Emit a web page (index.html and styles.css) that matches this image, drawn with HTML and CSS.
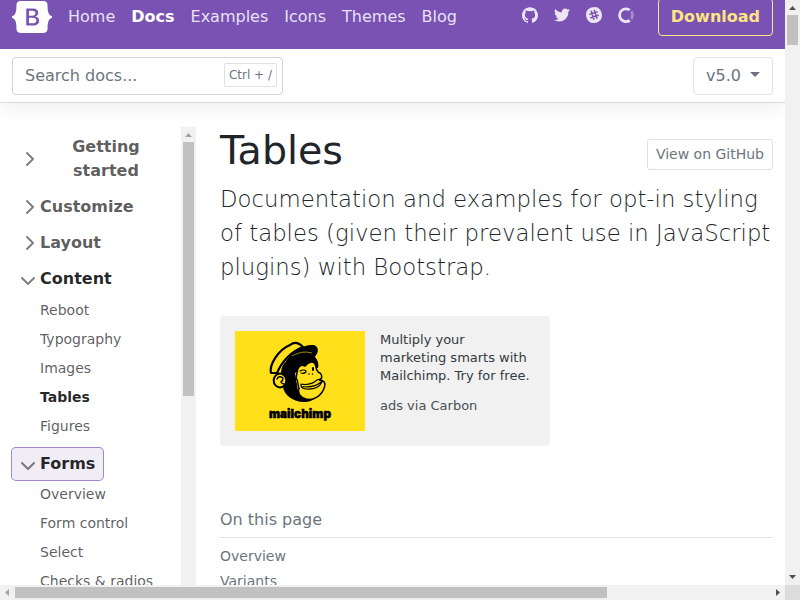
FILE: index.html
```html
<!DOCTYPE html>
<html lang="en">
<head>
<meta charset="utf-8">
<title>Tables · Bootstrap v5.0</title>
<link rel="stylesheet" href="styles.css">
</head>
<body>
<div class="window">
  <div class="viewport">
    <header class="navbar">
      <svg class="logo" viewBox="0 0 118 94" width="40" height="32"><path fill="currentColor" fill-rule="evenodd" d="M24.509 0c-6.733 0-11.715 5.893-11.492 12.284.214 6.14-.064 14.092-2.066 20.577C8.943 39.365 5.547 43.485 0 44.014v5.972c5.547.529 8.943 4.649 10.951 11.153 2.002 6.485 2.28 14.437 2.066 20.577C12.794 88.106 17.776 94 24.51 94H93.5c6.733 0 11.714-5.893 11.491-12.284-.214-6.14.064-14.092 2.066-20.577 2.009-6.504 5.396-10.624 10.943-11.153v-5.972c-5.547-.529-8.934-4.649-10.943-11.153-2.002-6.484-2.28-14.437-2.066-20.577C105.214 5.894 100.233 0 93.5 0H24.508zM80 57.863C80 66.663 73.436 72 62.543 72H44a2 2 0 01-2-2V24a2 2 0 012-2h18.437c9.083 0 15.044 4.92 15.044 12.474 0 5.302-4.01 10.049-9.119 10.88v.277C75.317 46.394 80 51.21 80 57.863zM60.521 28.34H49.948v14.934h8.905c6.884 0 10.68-2.772 10.68-7.727 0-4.643-3.264-7.207-9.012-7.207zM49.948 49.2v16.458H60.91c7.167 0 10.964-2.876 10.964-8.281 0-5.406-3.903-8.178-11.425-8.178H49.948z"/></svg>
      <nav class="nav-links">
        <a>Home</a><a class="active">Docs</a><a>Examples</a><a>Icons</a><a>Themes</a><a>Blog</a>
      </nav>
      <div class="nav-icons">
        <svg viewBox="0 0 512 499.36" width="16" height="16"><path fill="currentColor" fill-rule="evenodd" d="M256 0C114.64 0 0 114.61 0 256c0 113.09 73.34 209 175.08 242.9 12.8 2.35 17.47-5.56 17.47-12.34 0-6.08-.22-22.18-.35-43.54-71.2 15.49-86.2-34.34-86.2-34.34-11.64-29.57-28.42-37.45-28.42-37.45-23.27-15.84 1.73-15.55 1.73-15.55 25.69 1.81 39.21 26.38 39.21 26.38 22.84 39.12 59.92 27.82 74.5 21.27 2.33-16.54 8.94-27.82 16.25-34.22-56.84-6.43-116.6-28.43-116.6-126.49 0-27.95 10-50.8 26.35-68.69-2.63-6.48-11.42-32.5 2.51-67.75 0 0 21.49-6.88 70.4 26.24a242.65 242.65 0 0 1 128.18 0c48.87-33.13 70.33-26.24 70.33-26.24 14 35.25 5.18 61.27 2.55 67.75 16.41 17.9 26.31 40.75 26.31 68.69 0 98.35-59.85 120-116.88 126.32 9.19 7.9 17.38 23.53 17.38 47.41 0 34.22-.31 61.83-.31 70.23 0 6.85 4.61 14.81 17.6 12.31C438.72 464.97 512 369.08 512 256.02 512 114.62 397.37 0 256 0z"/></svg>
        <svg viewBox="0 0 512 416.32" width="16" height="16"><path fill="currentColor" d="M160.83 416.32c193.2 0 298.92-160.22 298.92-298.92 0-4.51 0-9-.2-13.52A214 214 0 0 0 512 49.38a212.93 212.93 0 0 1-60.44 16.6 105.7 105.7 0 0 0 46.3-58.19 209 209 0 0 1-66.79 25.37 105.09 105.09 0 0 0-181.73 71.91 116.12 116.12 0 0 0 2.66 24c-87.28-4.3-164.73-46.3-216.56-109.82A105.48 105.48 0 0 0 68 159.6a106.27 106.27 0 0 1-47.53-13.11v1.43a105.28 105.28 0 0 0 84.21 103.06 105.67 105.67 0 0 1-47.33 1.84 105.06 105.06 0 0 0 98.14 72.94A210.72 210.72 0 0 1 25 370.84a202.17 202.17 0 0 1-25-1.43 298.85 298.85 0 0 0 160.83 46.92"/></svg>
        <svg viewBox="0 0 16 16" width="16" height="16"><path fill="currentColor" d="M5.1.6C10.6-.9 13.3.6 15.4 5.1c1.4 5.5 0 8.300-4.500 10.300C5.400 16.900 2.600 15.400.6 10.900-.9 5.400.6 2.600 5.100.6z"/><g stroke="#7952b3" stroke-width="1.500" stroke-linecap="round"><path d="M5.300 4.300 7.800 12.200M8.400 3.400 10.900 11.300M3.900 7.300 11.200 4.900M4.900 10.700 12.200 8.300"/></g></svg>
        <svg viewBox="0 0 40 41" width="16" height="16"><g fill="currentColor"><path opacity=".4" d="M32.800 21c0 2.400-.8 4.900-2 6.900l5.100 5.100c2.500-3.400 4.100-7.600 4.100-12 0-4.600-1.600-8.800-4-12.200L30.700 14c1.200 2 2 4.300 2 7z"/><path d="M20 33.700a12.800 12.800 0 0 1 0-25.600c2.600 0 5 .7 7 2.100L32 5a20 20 0 1 0 .1 31.900l-5-5.200a13 13 0 0 1-7 2z"/></g></svg>
      </div>
      <a class="download">Download</a>
    </header>
    <div class="subnav">
      <div class="search"><span>Search docs...</span><kbd>Ctrl + /</kbd></div>
      <div class="version">v5.0<i class="caret"></i></div>
    </div>
    <div class="layout">
      <aside class="sidebar">
        <ul class="menu">
          <li><div class="group"><svg class="chev" viewBox="0 0 16 16"><path d="M5 14l6-6-6-6"/></svg><span>Getting started</span></div></li>
          <li><div class="group"><svg class="chev" viewBox="0 0 16 16"><path d="M5 14l6-6-6-6"/></svg><span>Customize</span></div></li>
          <li><div class="group"><svg class="chev" viewBox="0 0 16 16"><path d="M5 14l6-6-6-6"/></svg><span>Layout</span></div></li>
          <li><div class="group open"><svg class="chev" viewBox="0 0 16 16"><path d="M5 14l6-6-6-6"/></svg><span>Content</span></div>
            <ul class="pages"><li>Reboot</li><li>Typography</li><li>Images</li><li class="current">Tables</li><li>Figures</li></ul></li>
          <li><div class="group open focus"><svg class="chev" viewBox="0 0 16 16"><path d="M5 14l6-6-6-6"/></svg><span>Forms</span></div>
            <ul class="pages"><li>Overview</li><li>Form control</li><li>Select</li><li>Checks &amp; radios</li></ul></li>
        </ul>
        <div class="sidebar-scroll">
          <svg viewBox="0 0 15 15" width="15" height="15"><path fill="#a3a3a3" d="M4 10h7L7.500 6z"/></svg>
          <div class="thumb"></div>
        </div>
      </aside>
      <main class="content">
        <div class="title-row"><h1>Tables</h1><a class="view">View on GitHub</a></div>
        <p class="lead">Documentation and examples for opt-in styling of tables (given their prevalent use in JavaScript plugins) with Bootstrap.</p>
        <div class="ad">
          <svg class="ad-image" viewBox="0 0 130 100" width="130" height="100">
            <rect width="130" height="100" fill="#ffe01b"/>
            <path d="M54 28C63 21 73 22 80 26C83 29 84 34 83 37L70 36L60 42L63 60L82 66C78 70 73 71 69 71C58 71 49 64 48 56L46 43C46 36 49 31 54 28Z"/>
            <path fill="#ffe01b" stroke="#000" stroke-width="1.500" d="M62 42C62 36 66 33 70 35C74 30 79 30 80 33C82 36 80 40 85 42C88 45 87 48 84 49C89 49 91 52 89.500 56C87 65 78 70 71 68C65 66 62 62 64 57C62 54 64 50 61 47Z"/>
            <path fill="#ffe01b" stroke="#000" stroke-width="2.200" stroke-linejoin="round" d="M36 42C34 34 43 19 55 14C60 10 64 12 68 16C57 20 47 30 42 42Z"/>
            <path d="M51 30C58 20 68 13 79 14C85 16 84 24 76 29C68 26 60 27 53 33Z"/>
            <path d="M57 25Q67 19 77 22" fill="none" stroke="#ffe01b" stroke-width=".6"/>
            <ellipse cx="45" cy="49.500" rx="6.300" ry="7" fill="#ffe01b" stroke="#000" stroke-width="2"/>
            <g fill="none" stroke="#000" stroke-linecap="round">
              <path stroke-width="1.400" d="M42 48Q44 44 48 47Q48 50 46 51Q47 53 49 53"/>
              <path stroke-width="1.200" d="M65 40Q69 38 71 40M66 42Q69 43 71 41"/>
              <path stroke-width="2" d="M78 37V39"/>
              <path stroke-width="1.200" d="M66 53Q65 57 71 58Q83 59 87 51M66 53Q75 55 82 49Q86 47 87 51M68 55.500Q79 57 86 51"/>
            </g>
            <circle cx="74" cy="43" r=".8"/><circle cx="77.500" cy="43" r=".8"/>
            <text x="65" y="87" text-anchor="middle" textLength="62" lengthAdjust="spacingAndGlyphs" class="wordmark">mailchimp</text>
          </svg>
          <div class="ad-text"><p>Multiply your marketing smarts with Mailchimp. Try for free.</p><p class="via">ads via Carbon</p></div>
        </div>
        <div class="toc"><strong>On this page</strong><a>Overview</a><a>Variants</a></div>
      </main>
    </div>
  </div>
  <div class="vbar">
    <svg viewBox="0 0 15 15" width="15" height="15"><path fill="#505050" d="M4 10h7L7.500 6z"/></svg>
    <div class="thumb"></div>
    <svg class="end" viewBox="0 0 15 15" width="15" height="15"><path fill="#505050" d="M4 5h7L7.500 9z"/></svg>
  </div>
  <div class="hbar">
    <svg viewBox="0 0 15 15" width="15" height="15"><path fill="#a3a3a3" d="M9 4v7L5 7.500z"/></svg>
    <div class="thumb"></div>
    <svg class="end" viewBox="0 0 15 15" width="15" height="15"><path fill="#505050" d="M6 4v7L10 7.500z"/></svg>
  </div>
  <div class="corner"></div>
</div>
</body>
</html>
```
FILE: styles.css
```css
* { box-sizing: border-box; }
body { margin: 0; font: 16px/1.5 "DejaVu Sans", sans-serif; color: #212529; background: #fff; overflow: hidden; }
ul { list-style: none; margin: 0; padding: 0; }
p, h1 { margin: 0; }
svg { display: block; flex: none; }

.window { display: grid; grid-template: 585px 15px / 785px 15px; width: 800px; height: 600px; }
.viewport { overflow: hidden; display: flex; flex-direction: column; }

.navbar { flex: none; height: 49px; padding: 0 12px 15px; display: flex; align-items: center; background: #7952b3; color: #fff; }
.nav-links { display: flex; margin-left: 8px; }
.nav-links a { padding: 0 8px; color: rgba(255,255,255,.85); height: 24px; margin-top: -1px; }
.nav-links .active { font-weight: 700; color: #fff; }
.nav-icons { display: flex; gap: 16px; margin: -4px 24px 0 auto; color: rgba(255,255,255,.85); }
.download { height: 38px; padding: 6px 12px; border: 1px solid #ffe484; border-radius: 4px; color: #ffe484; font-weight: 700; line-height: 24px; }

.subnav { flex: none; height: 54px; padding: 8px 12px 7px; display: flex; justify-content: space-between; border-bottom: 1px solid #d9d9d9; box-shadow: 0 8px 16px rgba(0,0,0,.05); position: relative; z-index: 1; background: #fff; }
.search { width: 271px; height: 38px; border: 1px solid #ced4da; border-radius: 4px; padding: 0 5px 0 12px; display: flex; align-items: center; justify-content: space-between; color: #6c757d; }
kbd { font: 12px/22px "DejaVu Sans", sans-serif; height: 24px; padding: 0 4px 0 3.500px; border: 1px solid #dee2e6; border-radius: 2px; color: #6c757d; margin-top: -2px; }
.version { width: 80px; height: 38px; border: 1px solid #dee2e6; border-radius: 4px; padding: 0 12px; display: flex; align-items: center; color: #6c757d; }
.caret { margin: -3px 0 0 9px; border: 5px solid transparent; border-top-color: #6c757d; border-bottom: 0; }

.layout { display: flex; height: 482px; }
.sidebar { display: flex; flex: none; width: 196px; margin-top: 24px; padding-left: 12px; overflow: hidden; }
.menu { width: 169px; padding-top: 4px; }
.menu > li { margin-bottom: 4px; white-space: nowrap; }
.group { display: inline-flex; vertical-align: top; align-items: center; padding: 4px 8px 4px 10px; border-radius: 4px; font-weight: 700; color: rgba(0,0,0,.65); }
.group span { white-space: normal; text-align: center; padding-left: 2px; }
.menu > li:first-child .group { width: 168px; }
.menu > li:first-child span { flex: 1; padding: 0 20px 0 22px; }
.chev { width: 16px; height: 16px; fill: none; stroke: rgba(0,0,0,.5); stroke-width: 2; stroke-linejoin: round; stroke-linecap: round; }
.open { color: rgba(0,0,0,.85); }
.open .chev { transform: rotate(90deg); transform-origin: 6px 8px; }
.focus { background: rgba(121,82,179,.1); box-shadow: 0 0 0 1px rgba(121,82,179,.7); }
.pages { padding: 2px 0 2px 28px; font-size: 14px; color: rgba(0,0,0,.65); }
.pages li { line-height: 27px; margin-bottom: 2px; }
.focus + .pages { padding-top: 1px; }
.pages .current { font-weight: 700; color: rgba(0,0,0,.85); }
.sidebar-scroll { width: 15px; background: #f1f1f1; }
.thumb { background: #c1c1c1; }
.sidebar-scroll .thumb { height: 254px; margin: 0 2px; }

.content { flex: none; width: 553px; margin-left: 24px; padding-top: 24px; }
.title-row { display: flex; justify-content: space-between; align-items: flex-start; }
h1 { font-size: 39.600px; font-weight: 400; line-height: 47.500px; }
.view { margin-top: 12px; height: 31px; padding: 4px 8px; font-size: 14px; line-height: 21px; border: 1px solid #dee2e6; border-radius: 3px; color: #6c757d; }
.lead { margin-top: 7px; font-size: 22.800px; line-height: 34.200px; font-weight: 300; }
.ad { display: flex; width: 330px; height: 130px; margin-top: 32px; padding: 15px; gap: 15px; background: #f1f1f1; border-radius: 4px; }
.wordmark { font: 900 12px Inter, sans-serif; stroke: #000; stroke-width: .5px; }
.ad-text { width: 155px; font-size: 13px; line-height: 18px; color: #343a40; }
.via { margin-top: 12px; color: #495057; }
.toc { margin-top: 62px; color: #6c757d; font-size: 14px; }
.toc strong { display: block; font-size: 16px; font-weight: 400; padding-bottom: 5px; margin-bottom: 6px; border-bottom: 1px solid #dee2e6; }
.toc a { display: block; line-height: 25px; }

.vbar { background: #f1f1f1; display: flex; flex-direction: column; }
.vbar .thumb { height: 30px; margin: 0 2px; }
.vbar .end { margin-top: auto; }
.hbar { background: #f1f1f1; display: flex; }
.hbar .thumb { width: 592px; margin: 2px 0; }
.hbar .end { margin-left: auto; }
.corner { background: #dcdcdc; }
```
